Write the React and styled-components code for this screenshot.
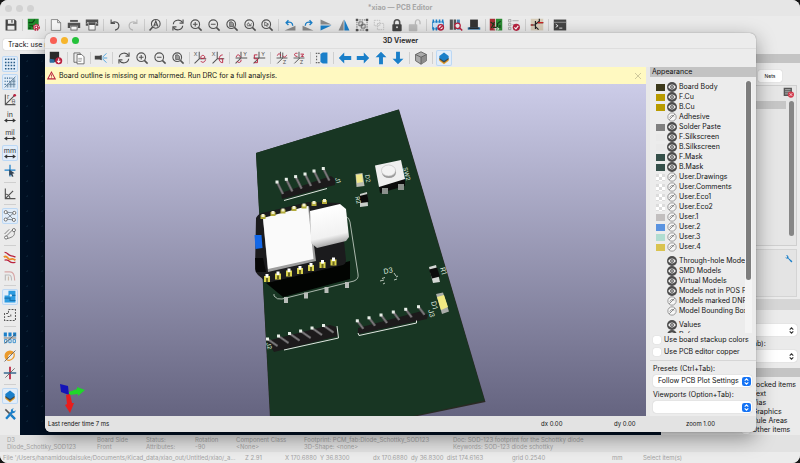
import React from "react";
import styled, { createGlobalStyle } from "styled-components";

const G = "#545454";
const B = "#1a7fc9";
const R = "#b9223f";

const lens = (inner) => (
  <>
    <circle cx="7" cy="7" r="5.6" fill="none" stroke={G} strokeWidth="1.4" />
    <path d="M11 11l4.2 4.2" stroke={G} strokeWidth="2" />
    {inner}
  </>
);

const axis = (name, flip) => (
  <>
    <path
      d={flip ? "M1 8h15M8 0v8M8 8l-7 7" : "M7 0v9h9M7 9l-6 6"}
      fill="none"
      stroke={G}
      strokeWidth="1.3"
    />
    <text x={flip ? 11 : 0} y="6" fontSize="7" fill={G}>
      {name}
    </text>
  </>
);

const arrow = (deg) => (
  <path
    transform={`rotate(${deg} 8 8)`}
    d="M0 8l7-7v4.500H16v5H7V15z"
    fill={B}
  />
);

const icons = {
  save: (
    <path
      fillRule="evenodd"
      d="M1 1h12l2 2v12H1zM4 1.5v5h8v-5H10v3.500H8.500V1.500zM3.500 9v5h9V9z"
      fill="#444"
    />
  ),
  boardSetup: (
    <>
      <rect width="14" height="14" fill="#1f8a2c" />
      <path d="M1 5h5l3-4M2 9h4l3 3M1 12h3" fill="none" stroke="#0b4413" strokeWidth="1.500" />
      <circle cx="11" cy="11" r="3.600" fill="#fff" stroke={R} strokeWidth="2" strokeDasharray="2 1" />
      <circle cx="11" cy="11" r="1.800" fill="none" stroke={R} strokeWidth="1.400" />
    </>
  ),
  page: (
    <path d="M2 1h8l4 4v10H2zM10 1v4h4" fill="#f8f8f8" stroke="#777" strokeWidth="1" />
  ),
  print: (
    <>
      <rect x="3" y="1.500" width="10" height="2.500" fill={G} />
      <path d="M0 5h16v7h-3V9H3v3H0z" fill={G} />
      <rect x="4" y="9.500" width="8" height="5" fill="#fff" stroke={G} />
    </>
  ),
  plot: (
    <>
      <path d="M0 1h16v5h-2V4H2v2H0z" fill={G} />
      <path d="M0 6h3v3H0zM13 6h3v3h-3z" fill={G} />
      <rect x="4" y="4.500" width="8" height="10" fill="#fff" stroke={G} />
      <rect x="4" y="5" width="8" height="3" fill={G} />
    </>
  ),
  undo: (
    <path d="M3 1v5h5M3 6c3-3.500 10-2.500 10 3 0 3-2 5-5 5.500" fill="none" stroke={G} strokeWidth="1.500" />
  ),
  redo: (
    <path d="M13 1v5H8M13 6C10 2.500 3 3.500 3 9c0 3 2 5 5 5.500" fill="none" stroke="#bdbdbd" strokeWidth="1.500" />
  ),
  find: (
    <>
      <circle cx="9" cy="6.500" r="5.600" fill="none" stroke={G} strokeWidth="1.400" />
      <path d="M5 10.500l-4 4.500" stroke={G} strokeWidth="2" />
      <path d="M6.300 10L9 3l2.700 7M7.400 8h3.300" fill="none" stroke={G} strokeWidth="1.500" />
    </>
  ),
  refresh: (
    <>
      <path d="M2 7c.500-6 9-7 12-2M14 9c-.500 6-9 7-12 2" fill="none" stroke={G} strokeWidth="1.500" />
      <path d="M14.500 1v4.500H10M1.500 15v-4.500H6" fill="none" stroke={G} strokeWidth="1.500" />
    </>
  ),
  zoomIn: lens(<path d="M4 7h6M7 4v6" stroke={G} strokeWidth="1.400" />),
  zoomOut: lens(<path d="M4 7h6" stroke={G} strokeWidth="1.400" />),
  zoomFit: lens(<path d="M5 4h3l2 2v4H5z" fill="#999" stroke={G} />),
  zoomObjects: lens(<path d="M4 8l2-3 2 4 2-3M4 9h6" fill="none" stroke={G} />),
  zoomSel: lens(<path d="M5 4v5l2-1 1 2 1-1-1-2h2z" fill="none" stroke={G} />),
  rotateCcw: (
    <>
      <path d="M1 15h14V9z" fill="#8a8a8a" />
      <path d="M6 2L3 5l3 3M3.500 5c5-2 8 0 8 4" fill="none" stroke={B} strokeWidth="1.700" />
    </>
  ),
  rotateCw: (
    <>
      <path d="M15 15H1V9z" fill="#8a8a8a" />
      <path d="M10 2l3 3-3 3M12.500 5c-5-2-8 0-8 4" fill="none" stroke={B} strokeWidth="1.700" />
    </>
  ),
  flipV: (
    <>
      <path d="M1 1l14 6.500H1z" fill="#8a8a8a" />
      <path d="M1 15l14-6.500H1z" fill={B} />
    </>
  ),
  flipH: (
    <>
      <path d="M1 15L7.500 1v14z" fill="#8a8a8a" />
      <path d="M15 15L8.500 1v14z" fill={B} />
    </>
  ),
  group: (
    <>
      <path d="M1.500 1.500h13v13h-13z" fill="none" stroke={G} strokeDasharray="2 1" />
      <path d="M0 0h3v3H0zM13 0h3v3h-3zM0 13h3v3H0zM13 13h3v3h-3z" fill={G} />
      <path d="M4 4h5v5H4zM7 7h5v5H7z" fill="#ddd" stroke={G} />
    </>
  ),
  ungroup: (
    <path d="M2 2h7v7H2zM6 6h8v8H6z" fill="#eee" stroke="#bbb" strokeDasharray="2 1" />
  ),
  lock: (
    <>
      <path d="M4.500 8V5c0-5 7-5 7 0v3" fill="none" stroke={G} strokeWidth="2" />
      <rect x="2" y="7" width="12" height="9" rx="1" fill="#444" />
      <circle cx="8" cy="11" r="1.300" fill="#ddd" />
    </>
  ),
  unlock: (
    <>
      <path d="M8.500 8V5c0-5 6-5 6 0v2" fill="none" stroke="#bbb" strokeWidth="1.600" />
      <rect x="0" y="7" width="11" height="9" rx="1" fill="#bdbdbd" />
    </>
  ),
  footprint: (
    <>
      <path d="M1 4h14v9H1z" fill="#cfe6f7" stroke={B} />
      <path d="M1 1h2v4H1zM5 1h2v4H5zM9 1h2v4H9zM13 1h2v4h-2zM1 11h2v4H1zM5 11h2v4H5z" fill={B} />
      <circle cx="11.500" cy="11" r="3.500" fill="#fff" stroke={R} strokeWidth="1.800" />
      <path d="M9 13.500l5-5" stroke={R} strokeWidth="1.800" />
    </>
  ),
  library: (
    <>
      <path d="M0 1h4v13H0zM5 1h3v13H5z" fill="#555" />
      <path d="M9 1h4v13H9z" fill="#4a86b5" />
      <circle cx="10" cy="9" r="3.500" fill="#eee" stroke={R} strokeWidth="1.600" />
      <path d="M12.500 11.500L16 15" stroke={R} strokeWidth="2" />
    </>
  ),
  chip: (
    <>
      <path d="M3 1h10v10H3z" fill="#333" />
      <path d="M0 11h16v3H0z" fill="#2c6da0" />
      <path d="M2 12h12" stroke="#222" strokeWidth="2" />
    </>
  ),
  update: (
    <>
      <rect width="7" height="15" fill="#a82f36" />
      <rect x="8" width="8" height="15" fill="#2c8c34" />
      <path d="M1 4l5 4M2 12l4-8M10 13V6l4-3M13 12V8M4 11h6" stroke="#163a1c" strokeWidth="1.500" fill="none" />
      <path d="M5 13h6M9 11l3 2-3 2" stroke="#fff" fill="none" />
    </>
  ),
  drc: (
    <>
      <path d="M1 1h3v3H1zM1 6h3v3H1zM1 11h3v3H1z" fill="none" stroke="#999" />
      <path d="M6 2.500h8M6 7.500h3" stroke="#999" />
      <circle cx="11" cy="11" r="4.600" fill={R} />
      <path d="M8.500 11l2 2 3-4" fill="none" stroke="#fff" strokeWidth="1.500" />
    </>
  ),
  schematic: (
    <>
      <rect y="0" width="16" height="15" fill="#d8cdb9" />
      <path d="M0 8h6M6 3v10M6 7l5-4V0M6 10l4 4M9 5h7" fill="none" stroke="#222" strokeWidth="1.500" />
      <path d="M9 5h7M0 8h3" stroke="#c22" strokeWidth="1.500" />
    </>
  ),
  console: (
    <>
      <rect y="1" width="16" height="14" fill="#444" />
      <path d="M0 4.500h16" stroke="#aaa" />
      <path d="M2.500 7l3 2-3 2M7 12h4" fill="none" stroke="#eee" strokeWidth="1.200" />
    </>
  ),
  reload3d: (
    <>
      <rect x="0" y="0" width="12" height="13" fill="#2a2a2a" />
      <path d="M0 9l6 1v4H0z" fill="#2c6da0" />
      <circle cx="11.500" cy="11.500" r="4.500" fill={R} />
      <path d="M11.500 8.500v5M9.300 11.500l2.200 2.400 2.200-2.400" fill="none" stroke="#fff" strokeWidth="1.300" />
    </>
  ),
  copy: (
    <>
      <path d="M1.500 1.500h8v12h-8z" fill="#eee" stroke={G} />
      <path d="M5.500 3.500h6l3 3v9h-9z" fill="#fff" stroke={G} />
      <path d="M7 8.500h5M7 10.500h5M7 12.500h4" stroke="#999" />
    </>
  ),
  raytrace: (
    <>
      <path d="M0 5h6l3-1v7l-3-1H0z" fill="#444" />
      <path d="M10 7l5-5M10 8h6M10 9l5 5" stroke="#4ca3dd" strokeWidth="1.200" />
    </>
  ),
  rotXneg: (
    <>
      {axis("X")}
      <path d="M9 8c0-5 6-4 5 0l-5 1M9 12c2 3 6 1 6-2" fill="none" stroke={R} strokeWidth="1.200" />
    </>
  ),
  rotXpos: (
    <>
      {axis("X")}
      <path d="M14 4c-6 0-6 10 0 10V9h-3" fill="none" stroke={R} strokeWidth="1.200" />
    </>
  ),
  rotYneg: (
    <>
      {axis("Y", true)}
      <path d="M2 7c0-4 5-4 5 0M3 12c1 3 6 2 5-2" fill="none" stroke={R} strokeWidth="1.200" />
    </>
  ),
  rotYpos: (
    <>
      {axis("Y", true)}
      <path d="M6 4H2v5h4v5H2" fill="none" stroke={R} strokeWidth="1.200" />
    </>
  ),
  rotZneg: (
    <>
      <path d="M1 8h14M6 0v8M9 1v7M9 8l-7 7" fill="none" stroke={G} strokeWidth="1.200" />
      <path d="M2 5c1-4 5-2 4 0M9 5c1 3 4 2 5-1" fill="none" stroke={R} strokeWidth="1.200" />
      <text x="9" y="16" fontSize="7" fill={G}>Z</text>
    </>
  ),
  rotZpos: (
    <>
      <path d="M1 8h14M8 0v8M9 8l-7 7" fill="none" stroke={G} strokeWidth="1.200" />
      <path d="M6 2c-5-1-5 4 0 4M10 3h4l-3 3h3" fill="none" stroke={R} strokeWidth="1.200" />
      <text x="9" y="16" fontSize="7" fill={G}>Z</text>
    </>
  ),
  flipBoard: (
    <>
      <path d="M6 3l3-2h6v14H9l-3-2z" fill={B} />
      <path d="M0 2h5M0 14h5M1 5v2M1 9v2" stroke="#666" strokeWidth="1.500" strokeDasharray="2 1" />
    </>
  ),
  left: arrow(0),
  right: arrow(180),
  up: arrow(90),
  down: arrow(270),
  cube: (
    <>
      <path d="M8 0l7 3.500v8L8 16l-7-4.500v-8z" fill="#aaa" stroke={G} />
      <path d="M8 7l7-3.500v8L8 16z" fill="#8c8c8c" />
      <path d="M1 3.500L8 7l7-3.500M8 7v9" fill="none" stroke={G} />
    </>
  ),
  layers: (
    <>
      <path d="M2 9h12v2.500L8 16l-6-4.500z" fill="#e39b27" />
      <path d="M2 8h12v1.500l-6 4.500-6-4.500z" fill="#3c4a52" />
      <path d="M8 1l6 4.500V8l-6 4-6-4V5.500z" fill={B} />
    </>
  ),
  grid: (
    <path
      d="M1.500 2h13M1.500 6h13M1.500 10h13M1.500 14h13"
      stroke="#2a5d86"
      strokeWidth="2"
      strokeDasharray="2 1.660"
    />
  ),
  gridOverride: (
    <>
      <path d="M1 3h10M1 7h7M1 11h4" stroke="#2a5d86" strokeWidth="1.500" strokeDasharray="1.500 1.500" />
      <path d="M15 1v14H1z" fill="#c5d8e8" />
      <path d="M1 15L15 1M5 15V11M9 15V7M13 15V3M6 11h9M10 7h5" stroke="#5a7891" fill="none" />
    </>
  ),
  polar: (
    <>
      <path d="M2 1v13h13M2 14L14 2" fill="none" stroke={G} strokeWidth="1.400" />
      <circle cx="14" cy="2" r="1.800" fill={R} />
      <text x="4" y="7" fontSize="8" fill={G}>r</text>
      <text x="10" y="13" fontSize="8" fill={G}>θ</text>
    </>
  ),
  inch: unitIcon("in"),
  mil: unitIcon("mil"),
  mm: unitIcon("mm"),
  cursor: (
    <>
      <path d="M8 0v15M1 7h14" stroke={B} strokeWidth="1.600" />
      <path d="M7 6l7 5-3 .500L12.500 15l-2 .500-1.300-3L7 14z" fill="#345" />
    </>
  ),
  angle: (
    <path d="M2 1v13h13M2 14L12 4M2 8c3 0 6 3 6 6" fill="none" stroke={G} strokeWidth="1.500" />
  ),
  ratsnest: (
    <>
      <path d="M3 3l10 10M13 4L3 12M3 3l9 1M3 12l9 1" fill="none" stroke="#68737c" />
      <circle cx="2.500" cy="3" r="2" fill="#fff" stroke={G} />
      <circle cx="13.500" cy="4" r="2" fill="#fff" stroke={G} />
      <circle cx="2.500" cy="12.500" r="2" fill="#fff" stroke={G} />
      <circle cx="13" cy="13" r="2" fill="#fff" stroke={G} />
    </>
  ),
  curved: (
    <>
      <path d="M3 11L12 2M4 14C13 12 15 9 13 4M1 8l6-6" fill="none" stroke="#777" strokeWidth="1.200" />
      <circle cx="3" cy="12.500" r="2" fill="#fff" stroke={G} />
      <circle cx="13" cy="3" r="2" fill="#fff" stroke={G} />
    </>
  ),
  highlight: (
    <>
      <path d="M1 2c4 0 4 3 7 4s4 1 7 2M1 12c4-1 5 0 7 2s4 1 7 1" fill="none" stroke={R} strokeWidth="1.700" />
      <path d="M0 8c5-3 5 4 8 3s3-1 7 1" fill="none" stroke="#ec8a25" strokeWidth="2.400" />
    </>
  ),
  netcolor: (
    <>
      <path d="M2 15V8h5c3 0 3 3 3 7" fill="none" stroke="#bbb" strokeWidth="1.500" />
      <path d="M1 4h7c5 0 6 4 6 11" fill="none" stroke="#d7a7a7" strokeWidth="1.500" />
      <path d="M6 15v-5" stroke="#cba" strokeWidth="1.500" />
    </>
  ),
  zoneFill: (
    <>
      <path d="M6 0h9v15H1V6h5z" fill="#2c9be0" />
      <path d="M1 9.500h7v3h7M9 6h6" fill="none" stroke="#1871ad" strokeWidth="1.500" />
      <circle cx="9" cy="6" r="1.500" fill="#e8f3fb" />
    </>
  ),
  zoneOutline: (
    <path d="M6 1h9v14H1V6h5zM5 10h4V6" fill="none" stroke={G} strokeWidth="1.300" strokeDasharray="2.500 1.500" />
  ),
  padSketch: (
    <>
      <path d="M0 1h4v5H0zM6 1h4v5H6zM12 1h4v5h-4z" fill={B} />
      <path d="M1 10h3v4H1zM6.500 10h3v4h-3zM12 10h3v4h-3z" fill="none" stroke={B} />
      <path d="M1 15L15 3M0 8h16" stroke={G} />
    </>
  ),
  viaSketch: (
    <>
      <path d="M3 13A7 7 0 0 1 13 3l-3 3a3 3 0 0 0-4 4z" fill="#eb9a2b" />
      <path d="M13 4a7 7 0 0 1-9 9" fill="none" stroke="#eb9a2b" strokeWidth="1.500" />
      <path d="M1 15L15 1" stroke={G} />
    </>
  ),
  trackSketch: (
    <>
      <path d="M8 0v16" stroke={R} strokeWidth="2.200" />
      <path d="M0 8h16" stroke="#3a6a90" strokeWidth="2" />
      <path d="M2 14L14 2" stroke={G} />
    </>
  ),
  tools: (
    <>
      <path d="M2 2l12 12" stroke={G} strokeWidth="2" />
      <path d="M12 4L3 14" stroke={B} strokeWidth="3" />
      <path d="M9 4a3.500 3.500 0 0 1 4-3l-2 2 2 2 2-2a3.500 3.500 0 0 1-3 4z" fill={B} />
      <path d="M9.500 9.500l5 5" stroke={B} strokeWidth="3" />
    </>
  ),
};

function unitIcon(label) {
  return (
    <>
      <text x="8" y="8" fontSize="9" textAnchor="middle" fill="#333">
        {label}
      </text>
      <path d="M2 12.500h12M4.500 10.500l-3 2 3 2M11.500 10.500l3 2-3 2" fill="none" stroke="#333" strokeWidth="1.300" />
    </>
  );
}

const editorTools =
  "save | boardSetup | page print plot | undo redo | find | refresh zoomIn zoomOut zoomFit zoomObjects zoomSel | rotateCcw rotateCw flipV flipH group ungroup lock unlock | footprint library chip | update drc | schematic | console";
const viewerTools =
  "reload3d | copy | raytrace | refresh zoomIn zoomOut zoomFit | rotXneg rotXpos | rotYneg rotYpos | rotZneg rotZpos | flipBoard | left right up down | cube | layers";
const sideTools =
  "grid gridOverride polar inch mil mm cursor | angle | ratsnest curved | highlight netcolor | zoneFill zoneOutline | padSketch viaSketch trackSketch | layers tools";

const layerGroups = [
  [
    ["Board Body", "#3c391b", true],
    ["F.Cu", "#b89b00", true],
    ["B.Cu", "#b89b00", true],
    ["Adhesive", "", false],
    ["Solder Paste", "#808080", true],
    ["F.Silkscreen", "#e9e9e9", true],
    ["B.Silkscreen", "#e9e9e9", true],
    ["F.Mask", "#35504a", true],
    ["B.Mask", "#35504a", true],
    ["User.Drawings", "checker", false],
    ["User.Comments", "checker", false],
    ["User.Eco1", "checker", false],
    ["User.Eco2", "checker", false],
    ["User.1", "#c2bfbf", false],
    ["User.2", "#5a93e0", false],
    ["User.3", "#b1ddd1", false],
    ["User.4", "#d9c350", false],
  ],
  [
    ["Through-hole Models", "", true],
    ["SMD Models", "", true],
    ["Virtual Models", "", true],
    ["Models not in POS File", "", true],
    ["Models marked DNP", "", false],
    ["Model Bounding Boxes", "", false],
  ],
  [
    ["Values", "", true],
    ["References", "", true],
  ],
];

const messages = [
  ["D3", "Diode_Schottky_SOD123", 90],
  ["Board Side", "Front", 49],
  ["Status:", "Attributes:", 49],
  ["Rotation", "-90", 41],
  ["Component Class", "<None>", 68],
  ["Footprint: PCM_fab:Diode_Schottky_SOD123", "3D-Shape: <none>", 149],
  ["Doc: SOD-123 footprint for the Schottky diode", "Keywords: SOD-123 diode schottky", 200],
];

const filters = ["Locked items", "Text", "Vias", "Graphics", "Rule Areas", "Other items"];

function Tools({ list, active = [], ...rest }) {
  return (
    <ToolBar {...rest}>
      {list.split(" ").map((name, i) =>
        name === "|" ? (
          <Separator key={i} />
        ) : (
          <ToolButton key={i} aria-label={name} $active={active.includes(name)}>
            <svg viewBox="-1 -1 18 18">{icons[name]}</svg>
          </ToolButton>
        )
      )}
    </ToolBar>
  );
}

function Eye({ on }) {
  return (
    <svg viewBox="0 0 18 18">
      {on ? (
        <>
          <circle cx="9" cy="9" r="9" fill="#4c4c4c" />
          <path d="M2 9c4-6 10-6 14 0-4 6-10 6-14 0z" fill="#eee" />
          <circle cx="9" cy="9" r="3" fill="#999" stroke="#4c4c4c" />
        </>
      ) : (
        <>
          <circle cx="9" cy="9" r="7.500" fill="#f6f6f6" stroke="#8a8a8a" strokeWidth="1.500" />
          <path d="M4 14L14 4M5 10c2-4 5-5 8-2" fill="none" stroke="#777" strokeWidth="1.500" />
        </>
      )}
    </svg>
  );
}

function Picker({ label, value, blue, id }) {
  return (
    <>
      <FieldLabel htmlFor={id}>{label}</FieldLabel>
      <SelectBox>
        <Select id={id} defaultValue={value}>
          <option>{value}</option>
        </Select>
        <Knob viewBox="0 0 10 10">
          {blue && <rect width="10" height="10" rx="2.500" fill="#1473f5" />}
          <path
            d="M3 4l2-2 2 2M3 6l2 2 2-2"
            fill="none"
            stroke={blue ? "#fff" : "#333"}
            strokeWidth="1.200"
          />
        </Knob>
      </SelectBox>
    </>
  );
}

// pin header: body outline, pin tips and the offset from tip to base
function Header({ body, tips, dx, dy }) {
  return (
    <g>
      <polygon points={body} fill="#1c1a1b" />
      {tips.map(([x, y]) => (
        <g key={x}>
          <path d={`M${x} ${y}l${dx} ${dy}`} stroke="#5f5d5f" strokeWidth="2.600" />
          <path d={`M${x} ${y}l${dx} ${dy}`} stroke="#8b898b" strokeWidth=".8" />
          <rect x={x - 1.5} y={y - 1.5} width="3" height="3" fill="#e8efe8" />
        </g>
      ))}
    </g>
  );
}

const topPads = [[263, 216], [273, 213], [283, 210.5], [294, 208], [304, 205.5], [314, 203], [324.5, 201]];
const bottomPads = [[267, 278], [278, 275.5], [289, 272.5], [300, 270], [311, 267], [322.5, 264], [333.5, 261.5]];
const legs = [[286, 300], [306, 295.5], [326.5, 290], [347, 285]];

function Board() {
  return (
    <Scene viewBox="45 84 601 332" preserveAspectRatio="xMidYMid slice">
      <defs>
        <linearGradient id="usb" x1="0" y1="0" x2="0.200" y2="1">
          <stop offset="0" stopColor="#cfcfcf" />
          <stop offset="0.150" stopColor="#fff" />
          <stop offset="0.800" stopColor="#f1f1f1" />
          <stop offset="1" stopColor="#a8a8a8" />
        </linearGradient>
      </defs>
      <path d="M256 153L399 109.500L485.500 402L408 418H270z" fill="#2a2a24" />
      <path d="M256 153L398.500 109.500L484.500 400.500L404 418H270.500z" fill="#183623" />

      <Header
        body="281,193 331,176 335,179 335,185 327,187 282,199"
        tips={[[277, 182], [286.3, 179.3], [295.6, 176.6], [305, 174], [314, 171], [323.3, 168.5]]}
        dx={6}
        dy={12}
      />
      <path d="M284 200.500L327 188.500" stroke="#dfe5df" />

      <Header
        body="267,341 330,325 336,327 338,336 274,352"
        tips={[[267.5, 339], [278.5, 336], [289.5, 333.5], [300.6, 331], [312, 328], [323.5, 325.5]]}
        dx={10}
        dy={7}
      />
      <path d="M284 350L338.500 338L337 326" fill="none" stroke="#dfe5df" />

      <Header
        body="358,328 422,311 428,315 427,319 358,334"
        tips={[[357.3, 320.8], [369, 317.8], [381, 315], [393.3, 312], [405.7, 309.3], [418.5, 306.7]]}
        dx={6}
        dy={8}
      />
      <path d="M358 333L359 335.500L416.500 323V320.500" fill="none" stroke="#dfe5df" />

      {/* tact switch */}
      <path d="M379 186l26-8v8l-25 7z" fill="#0b0b0b" />
      <path d="M382 188h6v6h-6zM398 184h6v6h-6z" fill="#8b908c" />
      <path d="M375 165.500l26-5.500 4 19-26 8z" fill="#efefef" />
      <ellipse cx="389" cy="172.500" rx="7" ry="5.500" fill="#9b9b9b" />
      <ellipse cx="388.500" cy="170.500" rx="7" ry="5.500" fill="#f3f3f3" stroke="#bbb" strokeWidth=".6" />

      {/* small chips */}
      <path d="M355.500 174l7-1 2 13-8 1z" fill="#b9bcb2" />
      <path d="M356 175l6-1 1 8-6 1z" fill="#f0e98a" />
      <path d="M360 194l7-2 1 14-8 1z" fill="#c9cdc9" />
      <path d="M359.500 196l8-2 1 8-8 1z" fill="#090909" />
      <path d="M429 267l7-2 4 17-7 1z" fill="#d5d8d5" />
      <path d="M429 269.500l8-2 3 9-8 2z" fill="#0b0b0b" />
      <path d="M436 294l7-1.500 6 19-7 2.500z" fill="#a9ada9" />
      <path d="M437 297l7-2 4 12-7 3z" fill="#f1ea83" />

      {/* controller module */}
      <path d="M266 283l84-22v18l-67 18z" fill="#020402" />
      <path d="M256 218q2-4 6-5l46-11 32 1 6 57q0 4-3 5l-72 17q-4 1-7-2l-6-5q-3-3-3-6z" fill="#1b1b1d" />
      <path d="M255 258l8 0 3 14-10 0z" fill="#060606" />
      <path d="M346 217q3 0 4 5l8 52q1 5-4 7l-72 18q-5 1-8-3v-2" fill="none" stroke="#cfd8cf" strokeWidth=".8" />
      <path d="M263 219l46-13 7 55-48 11z" fill="#9d9d9d" />
      <path d="M263 218l45-12 5.500 53-45.500 10z" fill="#fafafa" />
      <path d="M310 211l30-7 6 5 3 28-3 4-29 7-6-5z" fill="url(#usb)" />
      <path d="M254.500 235l7 0 1 13-7 1z" fill="#1468e8" />
      {topPads.map(([x, y]) => (
        <g key={x}>
          <rect x={x - 2.5} y={y - 1} width="5" height="4" fill="#b3ab3a" />
          <rect x={x - 1.5} y={y - 2} width="3" height="3" fill="#f1eed0" />
        </g>
      ))}
      {bottomPads.map(([x, y]) => (
        <g key={x}>
          <rect x={x - 3} y={y - 2} width="6" height="6" fill="#d9d24c" />
          <rect x={x - 1} y={y} width="2" height="4" fill="#6b6622" />
          <rect x={x - 1.5} y={y - 4} width="3" height="3.500" fill="#fff" />
        </g>
      ))}
      {legs.map(([x, y]) => (
        <rect key={x} x={x - 2} y={y - 3} width="4" height="6" fill="#b9bdb9" />
      ))}

      {/* silkscreen */}
      <g fill="#dfe8df" fontSize="7">
        <text transform="translate(335 178) rotate(75)" fontSize="6">J1</text>
        <text transform="translate(365 175) rotate(80)" fontSize="6">D2</text>
        <text transform="translate(355 197) rotate(75)" fontSize="6">R2</text>
        <text transform="translate(403 168) rotate(75)" fontSize="6">SW2</text>
        <text transform="translate(440 268) rotate(75)">R1</text>
        <text transform="translate(431 302) rotate(75)">D1</text>
        <text transform="translate(428 310) rotate(75)">J3</text>
        <text transform="translate(266 343) rotate(75)" fontSize="6">J2</text>
        <text transform="translate(384 274) rotate(-10)">D3</text>
      </g>
      <path
        d="M382 278.500l3-1M394 273l2 3M396 277l2-1M380 281l4-1M383 284l2-1M394 280l3-1M390 286"
        stroke="#b8c4b8"
        fill="none"
      />

      {/* orientation gizmo */}
      <path d="M60 384l8 2 1 9-8-3z" fill="#1414b8" />
      <path d="M69 392l8-3 0-2 8 3-7 6v-2l-9 1z" fill="#1fd62a" />
      <path d="M66 395l4-1 2 9 2 0-4 10-5-8 2-1z" fill="#e81c1c" />
    </Scene>
  );
}

function Viewer() {
  return (
    <ViewerWindow>
      <TitleBar>
        <Light $color="#f95f54" />
        <Light $color="#f6b52d" />
        <Light $color="#25c23b" />
        <Title>3D Viewer</Title>
      </TitleBar>
      <Tools list={viewerTools} active={["layers"]} $span="410px" />
      <ViewerBody>
        <MainColumn>
          <InfoBar>
            <svg viewBox="0 0 16 16">
              <path d="M8 2l6.500 12h-13z" fill="none" stroke={R} strokeWidth="1.800" />
              <path d="M8 6v4M8 11.500v1.500" stroke={R} strokeWidth="1.500" />
            </svg>
            <span>Board outline is missing or malformed. Run DRC for a full analysis.</span>
            <CloseButton aria-label="Close">
              <svg viewBox="0 0 8 8">
                <path d="M1 1l6 6M7 1L1 7" stroke="#cfc99c" />
              </svg>
            </CloseButton>
          </InfoBar>
          <Board />
        </MainColumn>
        <Sash />
        <Sidebar>
          <PanelTitle>Appearance</PanelTitle>
          <ListArea>
            <LayerList>
              {layerGroups.map((rows, i) => (
                <LayerGroup key={i}>
                  {rows.map(([name, color, on]) => (
                    <LayerRow key={name}>
                      <Swatch $color={color} />
                      <EyeButton aria-label={name} aria-pressed={on}>
                        <Eye on={on} />
                      </EyeButton>
                      <span>{name}</span>
                    </LayerRow>
                  ))}
                </LayerGroup>
              ))}
            </LayerList>
            <ScrollTrack>
              <ScrollThumb />
            </ScrollTrack>
          </ListArea>
          <CheckRow>
            <Check type="checkbox" />
            Use board stackup colors
          </CheckRow>
          <CheckRow>
            <Check type="checkbox" />
            Use PCB editor copper
          </CheckRow>
          <Presets>
            <Picker id="presets" label="Presets (Ctrl+Tab):" value="Follow PCB Plot Settings" blue />
            <Picker id="viewports" label="Viewports (Option+Tab):" value="" blue />
          </Presets>
        </Sidebar>
      </ViewerBody>
      <ViewerStatus>
        <span>Last render time 7 ms</span>
        <span>dx 0.00</span>
        <span>dy 0.00</span>
        <span>zoom 1.00</span>
      </ViewerStatus>
    </ViewerWindow>
  );
}

export default function App() {
  return (
    <>
      <GlobalStyle />
      <Desktop>
        <EditorTitle>
          <Light $color="#d2d2d2" />
          <Light $color="#d2d2d2" />
          <Light $color="#d2d2d2" />
          <Title $dim>*xiao — PCB Editor</Title>
        </EditorTitle>
        <Tools list={editorTools} $span="571px" />
        <TrackBar>
          <TrackButton>Track: use netclass width</TrackButton>
        </TrackBar>
        <EditorBody>
          <Tools list={sideTools} active={["grid", "gridOverride", "mm", "ratsnest", "zoneFill", "layers"]} $vertical />
          <Canvas />
          <RightDock>
            <DockHeader />
            <TabRow>
              <Tab>Nets</Tab>
            </TabRow>
            <NetPanel>
              <NetIcon viewBox="0 0 16 16">
                <path d="M1 1h12v12H1z" fill="#555" />
                <path d="M3 4h8M3 7h8M3 10h5" stroke="#ddd" />
                <circle cx="11.500" cy="11" r="4.500" fill="#d23a4c" />
                <path d="M9.500 9l4 4M13.500 9l-4 4" stroke="#fff" />
              </NetIcon>
              <NetRows>
                <NetSelected />
                <NetScroll />
              </NetRows>
            </NetPanel>
            <WrenchPanel>
              <svg viewBox="0 0 16 16">
                <path d="M2 5a4 4 0 0 0 5 3l6 7 2-2-7-6a4 4 0 0 0-4-5l2 3-2 2z" fill={B} />
              </svg>
            </WrenchPanel>
            <DockStrip />
            <DockFields>
              <Picker id="editor-presets" label="Presets (Ctrl+Tab):" value="" />
              <Picker id="editor-viewports" label="Viewports (Option+Tab):" value="" />
            </DockFields>
            <DockHeader />
            <FilterList>
              {filters.map((name) => (
                <FilterItem key={name}>
                  <Check type="checkbox" defaultChecked />
                  {name}
                </FilterItem>
              ))}
            </FilterList>
          </RightDock>
        </EditorBody>
        <MessagePanel>
          {messages.map(([top, bottom, width]) => (
            <Message key={top} $width={width}>
              <span>{top}</span>
              <span>{bottom}</span>
            </Message>
          ))}
        </MessagePanel>
        <EditorStatus>
          <span>File '/Users/hanamidoudaisuke/Documents/Kicad_data/xiao_out/Untitled/xiao/_a...</span>
          <span>Z 2.91</span>
          <span>X 170.6880&nbsp; Y 36.8300</span>
          <span>dx 170.6880&nbsp; dy 36.8300&nbsp; dist 174.6163</span>
          <span>grid 0.2540</span>
          <span>mm</span>
          <span>Select item(s)</span>
        </EditorStatus>
        <Viewer />
      </Desktop>
    </>
  );
}

const GlobalStyle = createGlobalStyle`
  * {
    box-sizing: border-box;
  }
  body {
    margin: 0;
    background: #161616;
    font-family: Inter, "Liberation Sans", sans-serif;
    font-size: 7px;
    line-height: 10px;
    color: #111;
  }
  button, select, input {
    font: inherit;
    color: inherit;
    margin: 0;
    padding: 0;
    border: 0;
    background: none;
  }
  svg {
    display: block;
  }
`;

const Desktop = styled.div`
  position: relative;
  display: flex;
  flex-direction: column;
  height: 100vh;
  min-height: 460px;
  overflow: hidden;
  border-radius: 8px;
  background: #ebebeb;
`;

const TitleBar = styled.header`
  display: flex;
  align-items: center;
  gap: 4px;
  height: 16px;
  padding: 0 5px;
  flex: none;
  border-bottom: 1px solid #dedede;
`;

const EditorTitle = styled(TitleBar)`
  background: #e6e6e6;
  border-bottom: 0;
`;

const Light = styled.span`
  width: 7px;
  height: 7px;
  border-radius: 50%;
  background: ${(p) => p.$color};
`;

const Title = styled.h1`
  flex: 1;
  margin: 0 33px 0 0;
  text-align: center;
  font-size: 7px;
  font-weight: 700;
  color: ${(p) => (p.$dim ? "#a6a6a6" : "#333")};
`;

const ToolBar = styled.div`
  display: flex;
  flex: none;
  flex-direction: ${(p) => (p.$vertical ? "column" : "row")};
  align-items: center;
  justify-content: space-between;
  max-width: ${(p) => p.$span};
  width: ${(p) => (p.$vertical ? "20px" : "auto")};
  height: ${(p) => (p.$vertical ? "auto" : "18px")};
  max-height: ${(p) => (p.$vertical ? "372px" : "none")};
  padding: ${(p) => (p.$vertical ? "3px 1px 5px 0" : "0 4px")};

  & > hr {
    width: ${(p) => (p.$vertical ? "12px" : "1px")};
    height: ${(p) => (p.$vertical ? "1px" : "12px")};
  }
`;

const Separator = styled.hr`
  flex: none;
  margin: 0;
  border: 0;
  background: #cfcfcf;
`;

const ToolButton = styled.button`
  flex: none;
  width: 14px;
  height: 14px;
  border-radius: 1px;
  background: ${(p) => (p.$active ? "#e2edf9" : "none")};
  box-shadow: ${(p) => (p.$active ? "0 0 0 1px #bcd8f5" : "none")};

  svg {
    width: 14px;
    height: 14px;
    overflow: visible;
  }
`;

const TrackBar = styled.div`
  height: 20px;
  flex: none;
  padding: 5px 3px;
`;

const TrackButton = styled.button`
  display: block;
  height: 11px;
  padding: 0 5px;
  border-radius: 2px;
  background: #fff;
  box-shadow: 0 0 1px #999;
  white-space: nowrap;
`;

const EditorBody = styled.div`
  display: flex;
  flex: 1;
  min-height: 0;
`;

const Canvas = styled.div`
  flex: 1;
  background-color: #001023;
  background-image: radial-gradient(#0a1f32 1px, transparent 1px);
  background-size: 15px 15px;
`;

const RightDock = styled.aside`
  display: flex;
  flex-direction: column;
  width: 139px;
`;

const DockHeader = styled.div`
  height: 9px;
  flex: none;
  background: #c4c4c4;
`;

const TabRow = styled.div`
  display: flex;
  justify-content: flex-end;
  padding: 7px 18px 3px 0;
`;

const Tab = styled.button`
  width: 24px;
  height: 12px;
  border-radius: 2px;
  background: #fff;
  box-shadow: 0 0 1px #aaa;
  font-size: 5px;
`;

const NetPanel = styled.div`
  display: flex;
  flex-direction: column;
  flex: 1;
  margin-right: 3px;
  border: 1px solid #cfcfcf;
  background: #e6e6e6;
`;

const NetIcon = styled.svg`
  width: 11px;
  height: 11px;
  margin: 1px 2px 3px auto;
`;

const NetRows = styled.div`
  display: flex;
  flex: 1;
  gap: 3px;
  padding-right: 2px;
`;

const NetSelected = styled.div`
  flex: 1;
  height: 8px;
  background: #c6c6c6;
`;

const NetScroll = styled.div`
  width: 5px;
  margin-bottom: 9px;
  border-radius: 3px;
  background: #868686;
`;

const WrenchPanel = styled.div`
  height: 48px;
  margin: 3px 3px 0 0;
  padding: 4px 3px;
  border: 1px solid #d4d4d4;
  background: #e4e4e4;

  svg {
    width: 9px;
    height: 9px;
    margin-left: auto;
  }
`;

const DockStrip = styled.div`
  height: 11px;
  margin-top: 2px;
  background: #d6d6d6;
`;

const DockFields = styled.div`
  padding: 0 3px 6px 24px;
`;

const FilterList = styled.div`
  display: flex;
  flex-direction: column;
  padding: 3px 0 1px 81px;
`;

const FilterItem = styled.label`
  display: flex;
  align-items: center;
  gap: 2px;
  height: 9px;
  white-space: nowrap;
`;

const MessagePanel = styled.div`
  display: flex;
  height: 17px;
  padding: 1px 0 0 7px;
  flex: none;
  font-size: 6px;
  line-height: 7px;
  color: #a3a3a3;
  background: #e2e2e2;
`;

const Message = styled.div`
  display: flex;
  flex-direction: column;
  width: ${(p) => p.$width}px;
  white-space: nowrap;
`;

const EditorStatus = styled.footer`
  display: grid;
  grid-template-columns: 242px 40px 88px 139px 100px 31px 1fr;
  align-items: center;
  height: 11px;
  flex: none;
  padding-left: 3px;
  font-size: 6px;
  color: #a3a3a3;
  background: #ececec;
  white-space: nowrap;
`;

const ViewerWindow = styled.section`
  position: absolute;
  inset: 33px 44px 31px 45px;
  display: flex;
  flex-direction: column;
  overflow: hidden;
  border-radius: 6px;
  background: #ececec;
  box-shadow: 0 6px 20px rgba(0, 0, 0, 0.4), 0 0 1px rgba(0, 0, 0, 0.5);
`;

const ViewerBody = styled.div`
  display: flex;
  flex: 1;
  min-height: 0;
`;

const MainColumn = styled.div`
  display: flex;
  flex-direction: column;
  flex: 1;
  min-width: 0;
`;

const InfoBar = styled.div`
  display: flex;
  align-items: center;
  gap: 3px;
  height: 17px;
  flex: none;
  padding: 0 4px 0 2px;
  background: #fff9c1;

  & > svg {
    width: 9px;
    height: 9px;
  }
`;

const CloseButton = styled.button`
  width: 8px;
  height: 8px;
  margin-left: auto;
`;

const Scene = styled.svg`
  flex: 1;
  width: 100%;
  min-height: 0;
  background: linear-gradient(#cccce8, #656480);
`;

const Sash = styled.div`
  width: 4px;
  background: #e8e8e8;
`;

const Sidebar = styled.aside`
  display: flex;
  flex-direction: column;
  width: 106px;
`;

const PanelTitle = styled.h2`
  height: 10px;
  margin: 0;
  padding: 0 2px;
  flex: none;
  font-size: 7px;
  font-weight: 400;
  background: #c3c3c3;
`;

const ListArea = styled.div`
  display: flex;
  flex: 1;
  min-height: 0;
  margin-bottom: 1px;
  padding: 0 4px 0 6px;
`;

const LayerList = styled.ul`
  flex: 1;
  margin: 0;
  padding: 5px 0 0;
  overflow: hidden;
  list-style: none;
`;

const LayerGroup = styled.div`
  margin-bottom: 4px;
`;

const LayerRow = styled.li`
  display: flex;
  align-items: center;
  height: 10px;
  white-space: nowrap;
`;

const Swatch = styled.span`
  flex: none;
  width: 9px;
  height: 7px;
  margin-right: 2px;
  background: ${(p) =>
    p.$color === "checker"
      ? "repeating-conic-gradient(#fff 0 25%, #dcdcdc 0 50%) 0 0 / 6px 6px"
      : p.$color || "transparent"};
`;

const EyeButton = styled.button`
  flex: none;
  width: 10px;
  height: 10px;
  margin-right: 2px;
`;

const ScrollTrack = styled.div`
  width: 7px;
  margin-top: 4px;
  padding: 0 1px;
  background: #f4f4f4;
`;

const ScrollThumb = styled.div`
  height: 79%;
  border-radius: 3px;
  background: #7d7d7d;
`;

const CheckRow = styled.label`
  display: flex;
  align-items: center;
  gap: 3px;
  height: 12px;
  flex: none;
  padding-left: 3px;
  white-space: nowrap;
`;

const Check = styled.input`
  appearance: none;
  flex: none;
  width: 8px;
  height: 8px;
  border-radius: 2px;
  background: #fff;
  box-shadow: 0 0 1px #bbb;
`;

const Presets = styled.div`
  flex: none;
  margin-top: 2px;
  padding: 0 4px 3px 3px;
  border-top: 1px solid #d6d6d6;
`;

const FieldLabel = styled.label`
  display: block;
  height: 10px;
  margin: 3px 0 1px;
  white-space: nowrap;
`;

const SelectBox = styled.div`
  display: flex;
  align-items: center;
  height: 12px;
  padding-right: 1px;
  border-radius: 3px;
  background: #fff;
  box-shadow: 0 0 1px #aaa;
`;

const Select = styled.select`
  appearance: none;
  flex: 1;
  min-width: 0;
  height: 12px;
  padding-left: 5px;
`;

const Knob = styled.svg`
  flex: none;
  width: 9px;
  height: 9px;
`;

const ViewerStatus = styled.footer`
  display: grid;
  grid-template-columns: 1fr 73px 72px 70px;
  align-items: center;
  height: 16px;
  flex: none;
  padding-left: 3px;
  font-size: 6px;
  background: #e3e3e3;
`;
